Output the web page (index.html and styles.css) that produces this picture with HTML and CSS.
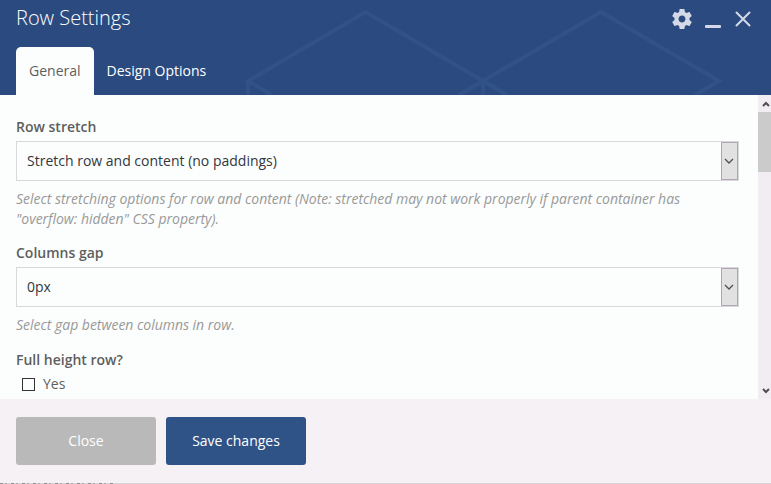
FILE: index.html
```html
<!DOCTYPE html>
<html lang="en">
<head>
  <meta charset="UTF-8" />
  <meta name="viewport" content="width=device-width, initial-scale=1.0"/>
  <title>Row Settings</title>
  <link rel="stylesheet" href="styles.css">
</head>
<body>
  <div class="panel">
    <header class="panel-header">
      <svg class="pattern" width="771" height="95" viewBox="0 0 771 95">
        <path d="M272 95 L248 81 L365.500 12 L507 95 M248 81 V95 M459 95 L601 12 L719 81 L695 95 M483 81 V95"/>
      </svg>
      <div class="title-bar">
        <h2>Row Settings</h2>
        <div class="controls">
          <svg class="gear" width="24" height="24" viewBox="0 0 24 24">
            <path d="M19.430 12.980c.04-.32.07-.64.07-.98s-.03-.66-.07-.98l2.110-1.650c.19-.15.24-.42.12-.64l-2-3.460c-.12-.22-.39-.3-.61-.22l-2.490 1c-.52-.4-1.080-.73-1.690-.98l-.38-2.650C14.460 2.180 14.250 2 14 2h-4c-.25 0-.46.18-.49.42l-.38 2.650c-.61.25-1.170.59-1.690.98l-2.490-1c-.23-.09-.49 0-.61.22l-2 3.460c-.13.22-.07.49.12.64l2.110 1.650c-.04.32-.07.65-.07.98s.03.66.07.98l-2.110 1.650c-.19.15-.24.42-.12.64l2 3.460c.12.22.39.3.61.22l2.490-1c.52.4 1.080.73 1.690.98l.38 2.650c.03.24.24.42.49.42h4c.25 0 .46-.18.49-.42l.38-2.650c.61-.25 1.170-.59 1.690-.98l2.490 1c.23.09.49 0 .61-.22l2-3.460c.12-.22.07-.49-.12-.64l-2.110-1.650zM12 15.500c-1.930 0-3.500-1.570-3.500-3.500s1.570-3.500 3.500-3.500 3.500 1.570 3.500 3.500-1.570 3.500-3.500 3.500z"/>
          </svg>
          <span class="minimize"></span>
          <svg class="close" width="16" height="16" viewBox="0 0 16 16">
            <path d="M1.500 1.500 L14.500 14.500 M14.500 1.500 L1.500 14.500"/>
          </svg>
        </div>
      </div>
      <nav class="tabs">
        <a class="tab active">General</a>
        <a class="tab">Design Options</a>
      </nav>
    </header>

    <div class="panel-body">
      <div class="fields">
        <div class="field">
          <div class="label">Row stretch</div>
          <div class="select">
            <span>Stretch row and content (no paddings)</span>
            <div class="arrow">
              <svg width="10" height="6" viewBox="0 0 10 6"><path d="M1 1 L5 5 L9 1"/></svg>
            </div>
          </div>
          <p class="description">Select stretching options for row and content (Note: stretched may not work properly if parent container has "overflow: hidden" CSS property).</p>
        </div>
        <div class="field">
          <div class="label">Columns gap</div>
          <div class="select">
            <span>0px</span>
            <div class="arrow">
              <svg width="10" height="6" viewBox="0 0 10 6"><path d="M1 1 L5 5 L9 1"/></svg>
            </div>
          </div>
          <p class="description">Select gap between columns in row.</p>
        </div>
        <div class="field field-check">
          <div class="label">Full height row?</div>
          <div class="check"><span class="box"></span>Yes</div>
        </div>
      </div>
      <div class="scrollbar">
        <svg width="8" height="6" viewBox="0 0 8 6"><path d="M1 5 L4 2 L7 5"/></svg>
        <div class="thumb"></div>
        <svg width="8" height="6" viewBox="0 0 8 6"><path d="M1 1 L4 4 L7 1"/></svg>
      </div>
    </div>

    <footer class="panel-footer">
      <div class="btn btn-close">Close</div>
      <div class="btn btn-save">Save changes</div>
    </footer>
    <div class="page-edge"></div>
  </div>
</body>
</html>
```
FILE: styles.css
```css
* {
  box-sizing: border-box;
}
body {
  margin: 0;
  font-family: "Open Sans", sans-serif;
  font-size: 14px;
  line-height: 20px;
  color: #5e5e5e;
  overflow: hidden;
}
.panel {
  display: flex;
  flex-direction: column;
  height: 484px;
  background: #fcfefd;
}
.panel-header {
  position: relative;
  display: flex;
  flex-direction: column;
  justify-content: space-between;
  height: 95px;
  background: #2b4b80;
  color: #fff;
}
.pattern {
  position: absolute;
  top: 0; left: 0;
  fill: none;
  stroke: #315288;
  stroke-width: 4;
}
.title-bar {
  position: relative;
  display: flex;
  justify-content: space-between;
  padding: 4px 20px 0 16px;
}
.title-bar h2 {
  margin: 0;
  font-size: 20px;
  font-weight: 300;
  line-height: 28px;
}
.controls {
  display: flex;
  height: 30px;
  align-items: center;
}
.gear {
  fill: #d5d9e7;
}
.minimize {
  width: 16px;
  height: 3px;
  margin: 15px 14px 0 11px;
  border-radius: 1px;
  background: #d5d9e7;
}
.close {
  fill: none;
  stroke: #d5d9e7;
  stroke-width: 2;
  stroke-linecap: round;
}
.tabs {
  position: relative;
  display: flex;
  padding-left: 16px;
}
.tab {
  height: 48px;
  padding: 0 13px;
  line-height: 48px;
}
.tab.active {
  background: #fcfefd;
  color: #5e5e5e;
  border-radius: 5px 5px 0 0;
}
.panel-body {
  display: flex;
  justify-content: space-between;
  height: 304px;
}
.fields {
  width: 739px;
  padding: 22px 0 0 16px;
}
.field-check {
  padding-top: 1px;
}
.label {
  font-weight: 600;
  margin-bottom: 4px;
}
.select {
  display: flex;
  justify-content: space-between;
  height: 40px;
  padding-left: 10px;
  border: 1px solid #d9d9db;
  color: #32373c;
  line-height: 38px;
}
.arrow {
  display: flex;
  align-items: center;
  justify-content: center;
  width: 17px;
  padding-right: 1px;
  border: 1px solid #b3a3b0;
  background: #e1e1e1;
}
.arrow svg, .scrollbar svg {
  fill: none;
  stroke: #505050;
  stroke-width: 1.3;
}
.description {
  margin: 8px 0 14px;
  font-style: italic;
  letter-spacing: -0.02px;
  color: #999;
}
.check {
  display: flex;
  align-items: center;
  gap: 8px;
  padding-left: 6px;
}
.box {
  width: 13px;
  height: 13px;
  border: 1px solid #333;
}
.scrollbar {
  display: flex;
  flex-direction: column;
  align-items: center;
  width: 13px;
  padding: 6px 0 5px;
  background: #f2edf2;
}
.scrollbar svg {
  flex: none;
  margin-left: 2px;
  stroke-width: 2;
}
.thumb {
  width: 13px;
  height: 60px;
  margin: 5px 0 auto;
  background: #cbcbcb;
}
.panel-footer {
  display: flex;
  gap: 10px;
  height: 84px;
  padding: 18px 16px;
  background: #f5f1f5;
}
/* sliver of the page under the panel */
.page-edge {
  height: 1px;
  background: linear-gradient(to right, transparent 115px, #d8d5d8 115px),
    repeating-linear-gradient(to right, #8c8c8c 0 3px, #d8d5d8 3px 5px, #aaa 5px 7px, #d8d5d8 7px 11px);
}
.btn {
  width: 140px;
  height: 48px;
  border-radius: 3px;
  color: #fff;
  line-height: 48px;
  text-align: center;
}
.btn-close {
  background: #b8b9b8;
}
.btn-save {
  background: #2f5287;
}
```
